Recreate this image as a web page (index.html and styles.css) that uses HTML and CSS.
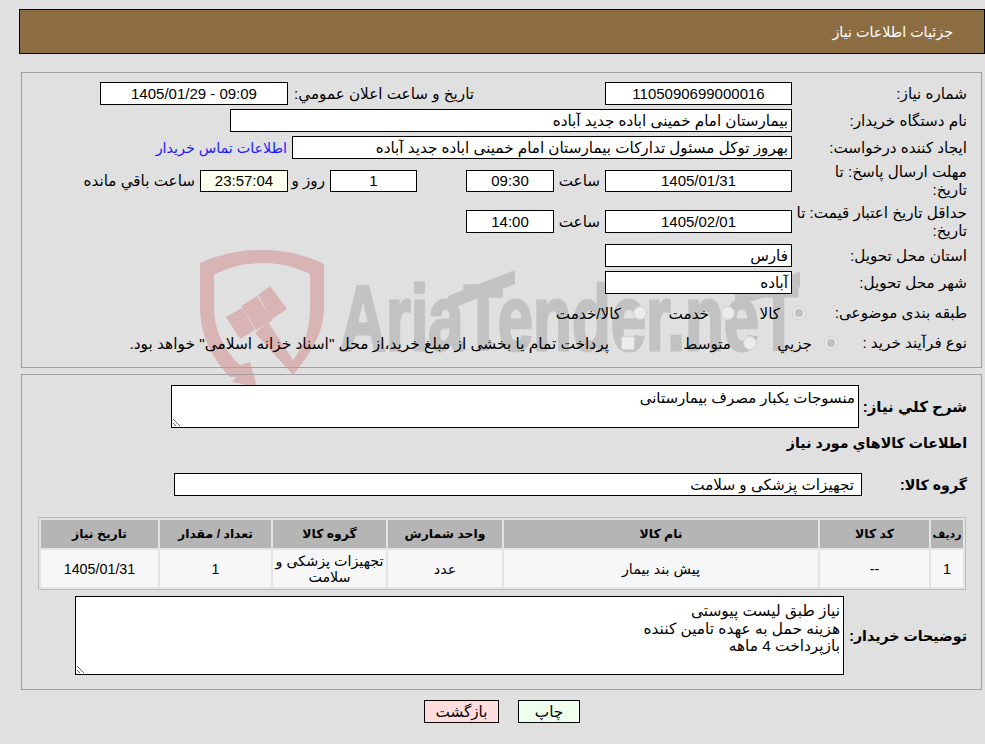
FILE: index.html
```html
<!DOCTYPE html>
<html lang="fa" dir="rtl">
<head>
<meta charset="utf-8">
<title>جزئیات اطلاعات نیاز</title>
<link rel="stylesheet" href="styles.css">
</head>
<body>
<svg class="watermark" width="640" height="145" viewBox="190 245 640 145" aria-hidden="true">
  <g class="wm-shield">
    <path d="M200 263C220 254 241 250 262 250C283 250 304 254 324 264V307C324 332 312 352 293 375L255 333L268 322L293 360C304 346 310 330 310 307V274C294 266 278 263 262 263C246 263 230 266 214 275V307C214 330 224 350 240 365L250 362L257 387L232 382L236 377L230 377C212 358 200 335 200 307Z"/>
    <path d="M226 317L242 308L255 330L240 339Z"/>
    <path d="M241 306L257 296L273 320L256 330Z"/>
    <path d="M258 295L270 286L287 309L272 319Z"/>
  </g>
  <g class="wm-word">
    <text x="340" y="350" font-size="92" textLength="458" lengthAdjust="spacingAndGlyphs">AriaTender.neT</text>
    <path d="M448 296L515 270V284L448 310Z"/>
    <path d="M735 292L800 272V287L735 306Z"/>
  </g>
</svg>

<header class="title-bar">جزئیات اطلاعات نیاز</header>

<section class="panel panel-main">
  <div class="row">
    <div class="label">شماره نیاز:</div>
    <div class="field w187 center">1105090699000016</div>
    <div class="label-inline notice-label">تاریخ و ساعت اعلان عمومي:</div>
    <div class="field w188 center ltr">1405/01/29 - 09:09</div>
  </div>
  <div class="row">
    <div class="label">نام دستگاه خریدار:</div>
    <div class="field w562">بیمارستان امام خمینی اباده جدید آباده</div>
  </div>
  <div class="row">
    <div class="label">ایجاد کننده درخواست:</div>
    <div class="field w500">بهروز توکل مسئول تدارکات بیمارستان امام خمینی اباده جدید آباده</div>
    <a class="contact" href="#">اطلاعات تماس خریدار</a>
  </div>
  <div class="row row-two">
    <div class="label">مهلت ارسال پاسخ: تا<br>تاریخ:</div>
    <div class="field w187 center short">1405/01/31</div>
    <div class="unit">ساعت</div>
    <div class="field w88 center short">09:30</div>
    <div class="field w87 center short days">1</div>
    <div class="unit-day">روز و</div>
    <div class="field w88 center short timer">23:57:04</div>
    <div class="label-inline">ساعت باقي مانده</div>
  </div>
  <div class="row row-two tall">
    <div class="label">حداقل تاریخ اعتبار قیمت: تا<br>تاریخ:</div>
    <div class="field w187 center">1405/02/01</div>
    <div class="unit">ساعت</div>
    <div class="field w88 center">14:00</div>
  </div>
  <div class="row">
    <div class="label">استان محل تحویل:</div>
    <div class="field w187">فارس</div>
  </div>
  <div class="row">
    <div class="label">شهر محل تحویل:</div>
    <div class="field w187">آباده</div>
  </div>
  <div class="row row-choice">
    <div class="label label-cat">طبقه بندی موضوعی:</div>
    <label class="choice c71"><input class="radio" type="radio" name="cat" checked disabled><span>کالا</span></label>
    <label class="choice c88"><input class="radio" type="radio" name="cat" disabled><span>خدمت</span></label>
    <label class="choice"><input class="radio" type="radio" name="cat" disabled><span>کالا/خدمت</span></label>
  </div>
  <div class="row row-process">
    <div class="label label-proc">نوع فرآیند خرید :</div>
    <label class="choice c81"><input class="radio" type="radio" name="proc" checked disabled><span>جزیي</span></label>
    <label class="choice c122"><input class="radio" type="radio" name="proc" disabled><span>متوسط</span></label>
    <label class="choice long"><input class="check" type="checkbox" disabled><span>پرداخت تمام یا بخشی از مبلغ خرید،از محل "اسناد خزانه اسلامی" خواهد بود.</span></label>
  </div>
</section>

<section class="panel panel-goods">
  <div class="desc-row">
    <div class="label-bold label-desc">شرح کلي نیاز:</div>
    <textarea class="area area-desc" readonly>منسوجات یکبار مصرف بیمارستانی</textarea>
  </div>
  <h2 class="section-title">اطلاعات کالاهاي مورد نیاز</h2>
  <div class="group-row">
    <div class="label-bold">گروه کالا:</div>
    <div class="field w688">تجهیزات پزشکی و سلامت</div>
  </div>
  <table class="goods">
    <colgroup>
      <col class="col-a"><col class="col-b"><col class="col-c"><col class="col-d"><col class="col-e"><col class="col-f"><col class="col-g">
    </colgroup>
    <thead>
      <tr><th>ردیف</th><th>کد کالا</th><th>نام کالا</th><th>واحد شمارش</th><th>گروه کالا</th><th>تعداد / مقدار</th><th>تاریخ نیاز</th></tr>
    </thead>
    <tbody>
      <tr><td>1</td><td>--</td><td>پیش بند بیمار</td><td>عدد</td><td>تجهیزات پزشکی و سلامت</td><td>1</td><td>1405/01/31</td></tr>
    </tbody>
  </table>
  <div class="notes-row">
    <div class="label-bold">توضیحات خریدار:</div>
    <textarea class="area area-notes" readonly>نیاز طبق لیست پیوستی
هزینه حمل به عهده تامین کننده
بازپرداخت 4 ماهه</textarea>
  </div>
</section>

<div class="actions">
  <button class="btn btn-print" type="button">چاپ</button>
  <button class="btn btn-back" type="button">بازگشت</button>
</div>
</body>
</html>
```

FILE: styles.css
```css
* { box-sizing: border-box; }
html, body { margin: 0; padding: 0; }
body {
  position: relative;
  width: 985px;
  height: 744px;
  overflow: hidden;
  background: #e0e0e0;
  color: #000;
  font-family: "Liberation Sans", "DejaVu Sans", sans-serif;
  font-size: 15.2px;
  line-height: 18px;
}
.watermark { position: absolute; left: 190px; top: 245px; z-index: 0; direction: ltr; }
.wm-shield path { fill: #d9b4b4; }
.wm-word { fill: #c2c2c2; }
.wm-word text {
  font-family: "Liberation Sans Narrow", "Liberation Sans", sans-serif;
  font-weight: 700;
  stroke: #c2c2c2;
  stroke-width: 3px;
}

.title-bar {
  position: relative;
  z-index: 1;
  width: 966px;
  height: 45px;
  margin: 9px 0 0 19px;
  padding-right: 31px;
  background: #8c6d42;
  border: 1px solid #000;
  color: #fff;
  font-size: 14.3px;
  line-height: 44px;
}
.panel {
  position: relative;
  z-index: 1;
  width: 961px;
  margin-right: 3px;
  border: 1px solid #a0a0a0;
}
.panel-main { height: 296px; margin-top: 18px; padding: 9px 14px 0 0; }
.panel-goods { height: 316px; margin-top: 6px; padding: 10px 14px 0 0; }

.row { display: flex; align-items: center; gap: 5px; min-height: 23px; margin-bottom: 4px; }
.row-two { height: 36px; }
.row-two.tall { height: 37px; }
.row-choice { height: 30px; margin-bottom: 0; gap: 0; }
.row-process { height: 30px; margin-bottom: 0; gap: 0; }
.label { flex: none; width: 170px; white-space: nowrap; }
.label-cat { width: 161px; }
.label-proc { width: 129px; }
.label-inline { flex: none; white-space: nowrap; }
.notice-label { width: 181px; margin-right: 126px; }

.field {
  flex: none;
  height: 23px;
  padding: 0 3px;
  background: #fff;
  border: 1px solid #000;
  line-height: 21px;
  white-space: nowrap;
  overflow: hidden;
}
.short { height: 22px; line-height: 20px; }
.center { text-align: center; font-size: 15px; }
.ltr { direction: ltr; }
.w187 { width: 187px; }
.w188 { width: 188px; }
.w562 { width: 562px; }
.w500 { width: 500px; }
.w88 { width: 88px; }
.w87 { width: 87px; }
.w688 { width: 688px; padding: 0 7px; }
.days { margin-right: 44px; }
.timer { background: #ffffee; }
.unit { flex: none; width: 41px; text-align: center; }
.unit-day { flex: none; width: 32px; white-space: nowrap; }
.contact { color: #1a1aff; font-size: 14.3px; text-decoration: none; white-space: nowrap; }

.choice { display: flex; flex: none; align-items: center; gap: 12px; white-space: nowrap; }
.choice span { position: relative; top: 1px; }
.long { font-size: 15.4px; }
.c71 { width: 71px; }
.c88 { width: 88px; }
.c81 { width: 81px; }
.c122 { width: 122px; }
.radio, .check {
  appearance: none;
  flex: none;
  width: 14px;
  height: 14px;
  margin: 0;
  background: #ececec;
  border: 1px solid #d0d0d0;
}
.radio { border-radius: 50%; }
.radio:checked { background: radial-gradient(circle, #c2c2c2 0 4px, #ececec 4.5px); }
.check { border-radius: 2px; }

.label-bold { flex: none; font-weight: 700; font-size: 14.2px; }
.label-desc { font-size: 15px; }
.desc-row { display: flex; align-items: center; justify-content: space-between; height: 43px; padding-left: 149px; }
.area {
  display: block;
  flex: none;
  padding: 0 3px;
  background: #fff;
  border: 1px solid #000;
  border-radius: 0;
  color: #000;
  font: inherit;
  outline: none;
  overflow: hidden;
}
.area-desc { width: 688px; height: 43px; padding: 3px; font-size: 15px; }
.section-title { margin: 6px 0 0; height: 18px; font-size: 14.2px; line-height: 18px; font-weight: 700; }
.group-row { display: flex; align-items: center; justify-content: space-between; height: 23px; margin-top: 21px; padding-left: 152px; }
.goods {
  table-layout: fixed;
  width: 928px;
  margin: 21px 1px 0 0;
  border: 1px solid #bcbcbc;
  border-spacing: 2px;
  border-collapse: separate;
  background: #e4e4e4;
}
.col-a { width: 32px; }
.col-b { width: 109px; }
.col-c { width: 314px; }
.col-d { width: 114px; }
.col-e { width: 113px; }
.col-f { width: 111px; }
.col-g { width: 117px; }
.goods th, .goods td { padding: 0 1px; text-align: center; }
.goods th { height: 28px; background: #b5b5b5; font-size: 12.4px; font-weight: 700; }
.goods th:first-child { font-size: 11px; }
.goods td { height: 37px; background: #f7f7f7; font-size: 14.3px; line-height: 16px; }
.notes-row { display: flex; align-items: center; justify-content: space-between; height: 79px; margin-top: 6px; padding-left: 53px; }
.area-notes { width: 769px; height: 79px; padding: 5px 3px 3px; font-size: 15.4px; line-height: 17.5px; }
.actions { position: relative; z-index: 1; display: flex; justify-content: center; gap: 19px; width: 156px; margin: 10px 405px 0 0; }
.btn {
  flex: none;
  height: 23px;
  padding: 0;
  border: 1px solid #000;
  border-radius: 0;
  color: #000;
  font: inherit;
}
.btn-print { width: 62px; background: #eeffee; }
.btn-back { width: 75px; background: #ffdddd; }
```
